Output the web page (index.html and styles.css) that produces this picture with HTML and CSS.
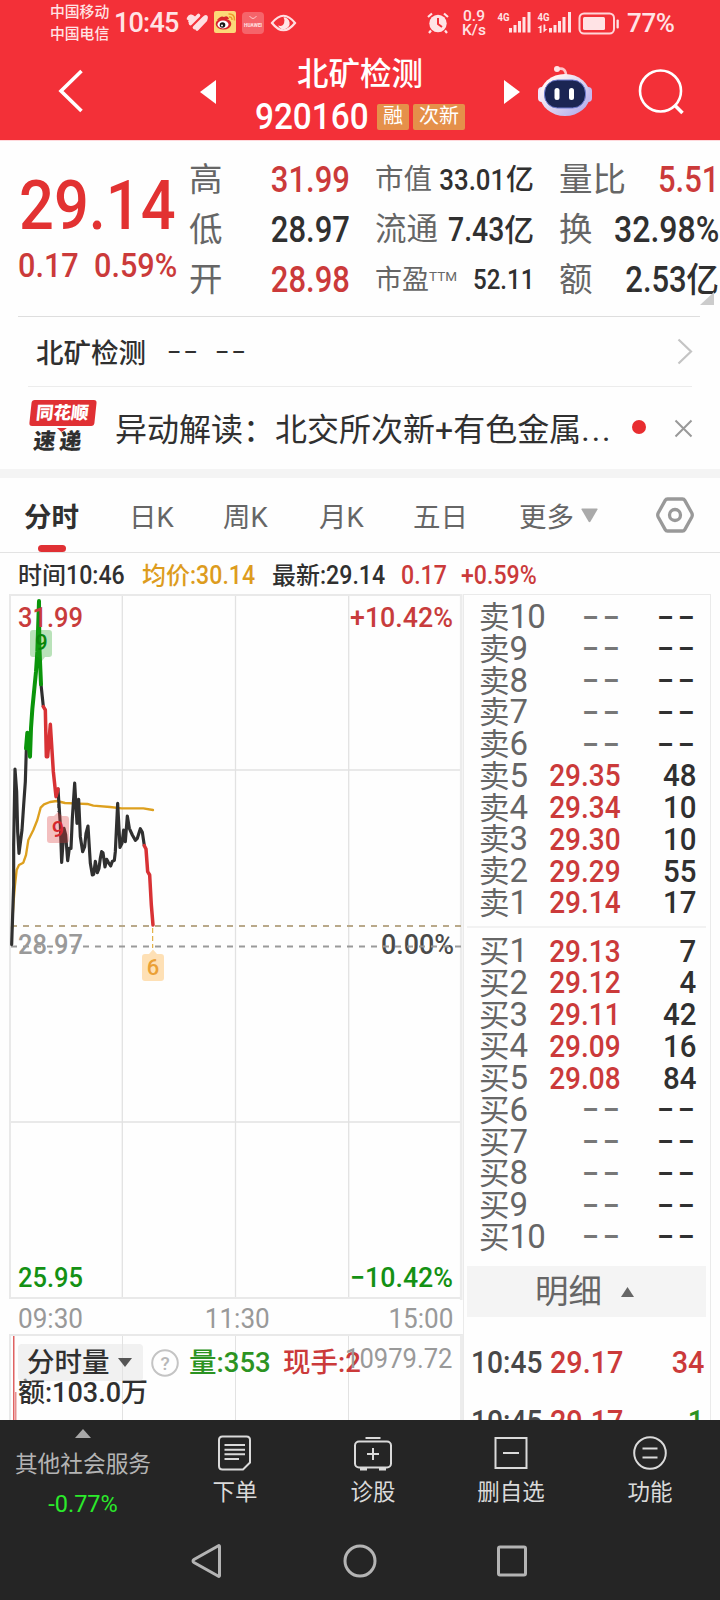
FILE: index.html
```html
<!DOCTYPE html>
<html lang="zh-CN">
<head>
<meta charset="utf-8">
<title>北矿检测 920160</title>
<link rel="stylesheet" href="styles.css">
</head>
<body>
<header class="top">
  <div class="status">
    <div class="carriers"><span>中国移动</span><span>中国电信</span></div>
    <span class="clock">10:45</span>
    <svg class="st-icons" width="112" height="26" viewBox="185 10 112 26">
      <g stroke="#ffdfe2" stroke-width="3.6" stroke-linecap="round" fill="none">
        <path d="M188.500 18.500q2-4 5-1l-3.500 4M190.500 23.500l8-8M194.500 27.500l9-9q4-4 2 1.500l-8.500 9"/>
      </g>
      <rect x="214" y="11" width="22" height="22" rx="2" fill="#fcd978"/>
      <ellipse cx="223.500" cy="24" rx="7.800" ry="5.600" fill="#d8242b"/>
      <path d="M217 20q4-5 7-3 4-2 5 2" fill="#d8242b"/>
      <ellipse cx="223" cy="24.500" rx="5.500" ry="3.900" fill="#fff"/>
      <circle cx="222.500" cy="25" r="2.800" fill="#161616"/><circle cx="222" cy="25.400" r="1" fill="#fff"/>
      <path d="M229 17q3-.5 3 3M228.500 14q6.500-.5 6 6.500" fill="none" stroke="#ef9a2d" stroke-width="1.500"/>
      <rect x="242" y="12" width="22" height="22" rx="4" fill="#f5646a"/>
      <path d="M249.500 16q3.500 5 7 0" fill="none" stroke="#ffc9cc" stroke-width="1"/>
      <text x="244" y="26.500" font-size="4.500" font-weight="700" fill="#ffe4e5" textLength="18" lengthAdjust="spacingAndGlyphs">HUAWEI</text>
      <path d="M272 23q11.500-14.500 23 0q-11.500 14.500-23 0z" fill="none" stroke="#ffdfe2" stroke-width="2.200"/>
      <path d="M283.500 17.300a6 6 0 1 1-5.400 8.300q4.500 1.500 6-2.600 1-3-.6-5.700z" fill="#ffe5e7"/>
    </svg>
    <svg class="st-alarm" width="22" height="22" viewBox="0 0 22 22">
      <circle cx="11" cy="11.500" r="8.700" fill="#ffe3e5"/><path d="M11 6v6l4 3" stroke="#f23038" stroke-width="2" fill="none"/>
      <path d="M1 5l4-3.500M21 5l-4-3.500M4 18.500l-2 2.500M18 18.500l2 2.500" stroke="#ffe3e5" stroke-width="2.200"/>
    </svg>
    <div class="speed"><span>0.9</span><span>K/s</span></div>
    <svg class="st-signal" width="122" height="24" viewBox="498 11 122 24">
      <g fill="#ffe3e5">
        <text x="498.500" y="21" font-size="11" font-weight="700" textLength="12" lengthAdjust="spacingAndGlyphs">4G</text>
        <text x="538.500" y="21" font-size="11" font-weight="700" textLength="12" lengthAdjust="spacingAndGlyphs">4G</text>
        <path d="M510 28h3v4.500h-3zM514.500 25h3v7.500h-3zM519 21h3v11.500h-3zM523.500 17h3v15.500h-3zM528.500 12h3v20.500h-3zM550 28h3v4.500h-3zM554.500 25h3v7.500h-3zM559 21h3v11.500h-3zM563.500 17h3v15.500h-3zM569 12h3v20.500h-3z"/>
        <path d="M538.500 28l4-3v8h-1.800v-5zM548.500 29l-4 3.500v-8h1.800v4.500z"/>
        <rect x="584" y="17" width="22" height="13" rx="1.500"/><rect x="617.500" y="19.500" width="2.300" height="9" rx="1"/>
      </g>
      <rect x="580.500" y="13.500" width="34.500" height="20" rx="4.500" fill="none" stroke="#ffd5d8" stroke-width="2"/>
    </svg>
    <span class="battery">77%</span>
  </div>
  <div class="titlebar">
    <svg class="back" width="26" height="44" viewBox="0 0 26 44"><path d="M23.500 2L3 22l20.500 20" fill="none" stroke="#fff" stroke-width="3.600"/></svg>
    <svg class="prev" width="16" height="24" viewBox="0 0 16 24"><path d="M16 0v24L0 12z" fill="#fff"/></svg>
    <div class="stock">
      <div class="name">北矿检测</div>
      <div class="code"><span class="code-no">920160</span><span class="tag">融</span><span class="tag wide">次新</span></div>
    </div>
    <svg class="next" width="16" height="24" viewBox="0 0 16 24"><path d="M0 0v24l16-12z" fill="#fff"/></svg>
    <svg class="robot" width="56" height="52" viewBox="0 0 56 52">
      <defs><linearGradient id="shell" x1="0" y1="0" x2="1" y2="1"><stop offset=".2" stop-color="#fff3f4"/><stop offset="1" stop-color="#a8a4ec"/></linearGradient></defs>
      <path d="M21 4q8-2 8 7" fill="none" stroke="#ffc4ca" stroke-width="2.600"/><circle cx="20" cy="4" r="3" fill="#ffe3e6"/>
      <rect x="1" y="22" width="8" height="15" rx="4" fill="#f2e4fb"/><rect x="47" y="22" width="8" height="15" rx="4" fill="#c7b8ef"/>
      <ellipse cx="28" cy="30" rx="25" ry="21" fill="url(#shell)"/>
      <rect x="7.500" y="15" width="41" height="28" rx="13" fill="#1b2553" stroke="#6e7bd0" stroke-width="1"/>
      <rect x="17.500" y="23" width="5" height="12" rx="2.500" fill="#fff"/><rect x="32" y="23" width="5" height="12" rx="2.500" fill="#fff"/>
    </svg>
    <svg class="search" width="46" height="46" viewBox="0 0 46 46"><circle cx="22.500" cy="22" r="20.500" fill="none" stroke="#fff" stroke-width="2.600"/><path d="M36.500 36l8 8" stroke="#fff" stroke-width="3.500"/></svg>
  </div>
</header>

<section class="quote">
  <div class="last">
    <div class="price"><span class="n">29.14</span></div>
    <div class="change"><span class="n c1">0.17</span><span class="n">0.59%</span></div>
  </div>
  <dl class="facts">
    <div><dt>高</dt><dd class="n red">31.99</dd></div>
    <div><dt>低</dt><dd class="n">28.97</dd></div>
    <div><dt>开</dt><dd class="n red">28.98</dd></div>
  </dl>
  <dl class="facts mid">
    <div class="s1"><dt>市值</dt><dd class="n">33.01<i>亿</i></dd></div>
    <div class="s2"><dt>流通</dt><dd class="n">7.43<i>亿</i></dd></div>
    <div class="s3"><dt>市盈<sup>TTM</sup></dt><dd class="n">52.11</dd></div>
  </dl>
  <dl class="facts end">
    <div><dt>量比</dt><dd class="n red">5.51</dd></div>
    <div><dt>换</dt><dd class="n pc">32.98%</dd></div>
    <div><dt>额</dt><dd class="n">2.53<i>亿</i></dd></div>
  </dl>
  <svg class="corner" width="14" height="13" viewBox="0 0 14 13"><path d="M14 0v13H0z" fill="#ccc"/></svg>
</section>

<section class="related">
  <span>北矿检测</span><span class="dash">--</span><span class="dash">--</span>
  <svg width="16" height="27" viewBox="0 0 16 27"><path d="M1.500 1.500l12.500 12-12.500 12" fill="none" stroke="#c4c4c4" stroke-width="2.200"/></svg>
</section>
<section class="news">
  <div class="badge"><span class="b1">同花顺</span><span class="b2">速递</span></div>
  <p>异动解读：<span>北交所次新+有色金属<b>...</b></span></p>
  <i class="dot"></i>
  <svg width="19" height="19" viewBox="0 0 19 19"><path d="M1.500 1.500l16 16M17.500 1.500l-16 16" stroke="#999" stroke-width="2"/></svg>
</section>

<nav class="tabs">
  <a class="on">分时</a><a>日K</a><a>周K</a><a>月K</a><a>五日</a><a>更多</a>
  <svg class="more" width="17" height="15" viewBox="0 0 17 15"><path d="M1 .5h15q1 0 .5 1L9.500 13.500q-1 1.500-2 0L.5 1.500Q0 .5 1 .5z" fill="#aaa"/></svg>
  <svg class="gear" width="38" height="36" viewBox="0 0 38 36"><path d="M11.500 2h15q1.500 0 2.300 1.400l7 12.600q1 2 0 4l-7 12.600q-.8 1.400-2.300 1.400h-15q-1.500 0-2.300-1.400l-7-12.600q-1-2 0-4l7-12.600Q10 2 11.500 2z" fill="none" stroke="#999" stroke-width="3.300"/><circle cx="19" cy="18" r="5.500" fill="none" stroke="#999" stroke-width="3.300"/></svg>
</nav>

<div class="readout">
  <span class="r1">时间<b class="n">10:46</b></span><span class="r2 amber">均价<b class="n">:30.14</b></span><span class="r3">最新<b class="n">:29.14</b></span><span class="r4 red"><b class="n">0.17</b></span><span class="red"><b class="n">+0.59%</b></span>
</div>

<main class="board">
  <div class="charts">
    <svg class="chart" width="463" height="706" viewBox="0 594 463 706">
      <path d="M122.300 595v703M235.500 595v703M348.700 595v703M10 770h451M10 1122h451" stroke="#e2e2e2" stroke-width="1.300" fill="none"/>
      <path d="M10 594v705M9 595h453M9 1298h453" stroke="#e9e9e9" stroke-width="2" fill="none"/>
      <path d="M461.200 594v706" stroke="#ececec" stroke-width="2.600"/>
      <g font-weight="500" font-size="27.500">
        <text x="18" y="954" fill="#999" textLength="65" lengthAdjust="spacingAndGlyphs">28.97</text>
        <text x="381" y="954" fill="#4a4a4a" textLength="73" lengthAdjust="spacingAndGlyphs">0.00%</text>
        <text x="18" y="1287" fill="#149114" textLength="65" lengthAdjust="spacingAndGlyphs">25.95</text>
        <text x="350" y="1287" fill="#149114" textLength="103" lengthAdjust="spacingAndGlyphs">−10.42%</text>
        <text x="350" y="627" fill="#c83c3c" textLength="103" lengthAdjust="spacingAndGlyphs">+10.42%</text>
      </g>
      <path d="M11 926h450" stroke="#b9a98a" stroke-width="2" stroke-dasharray="6 6"/>
      <path d="M11 946.500h450" stroke="#9a9a9a" stroke-width="2" stroke-dasharray="6 6"/>
      <g transform="translate(0 585) scale(.33333)" fill="none" stroke-linejoin="round" stroke-linecap="round">
        <path d="M36 1030L40 960 45 900 50 855 57 840 70 833 78 810 85 765 100 735 112 705 122 668 132 658 150 651 170 648 195 654 235 656 262 657 280 662 330 666 365 670 430 670 459 675" stroke="#dda01f" stroke-width="7"/>
        <path d="M35 1078L41 900 41 780 45 552 50 620 53 740 57 805 66 735 71 660 76 590 79 492M123 298L130 365M174 612L181 720 185 832 192 730 197 750 203 827 208 790 213 790 217 700 224 594 231 715 236 643 241 755 248 800 254 785 258 745 264 723 271 835 277 870 281 868 286 829 292 863 297 850 301 820 305 800 309 803 315 846 320 823 325 832 332 843 337 829 343 826 346 800 353 655 360 787 366 775 371 735 376 770 382 693 388 730 397 750 406 766 412 760 421 731 427 742 433 782" stroke="#303030" stroke-width="9.500"/>
        <path d="M130 365L136 375 139 515 143 515 151 418 160 560 168 635 174 612M433 782L438 792 443 860 449 870 454 960 459 1020" stroke="#d83235" stroke-width="10.500"/>
        <path d="M78 490L82 443 90 515 93 430 97 372 108 260 112 200 117 48 118 180 123 298" stroke="#0b950b" stroke-width="12"/>
      </g>
      <path d="M58 797v15" stroke="#333" stroke-dasharray="4 3"/>
      <path d="M33 630h16q3 0 3 3v21q0 3-3 3h-4l-3 4-4-4h-5q-3 0-3-3v-21q0-3 3-3z" fill="#19a119" fill-opacity=".3"/>
      <path d="M50 816h4l4-4 4 4h4q3 0 3 3v21q0 3-3 3H50q-3 0-3-3v-21q0-3 3-3z" fill="#dc3a3a" fill-opacity=".32"/>
      <path d="M152.700 928v20" stroke="#dda01f" stroke-dasharray="5 3"/>
      <path d="M145 954h4l4-4.500 4 4.500h4q3 0 3 3v21q0 3-3 3h-16q-3 0-3-3v-21q0-3 3-3z" fill="#fee0b5"/>
      <g font-weight="500" font-size="22" text-anchor="middle">
        <text x="41.500" y="650" fill="#0b850b">9</text><text x="58" y="837" fill="#d6262d">9</text><text x="153" y="975" fill="#eba035">6</text>
      </g>
      <text x="18" y="627" font-weight="500" font-size="27.500" fill="#c83c3c" textLength="65" lengthAdjust="spacingAndGlyphs">31.99</text>
    </svg>
    <div class="axis"><span class="n">09:30</span><span class="n">11:30</span><span class="n">15:00</span></div>
    <div class="volume">
      <div class="vol-head">
        <span class="pick">分时量<svg width="14" height="9" viewBox="0 0 14 9"><path d="M0 0h14L7 9z" fill="#555"/></svg></span>
        <svg class="help" width="28" height="28" viewBox="0 0 28 28"><circle cx="14" cy="14" r="12.800" fill="none" stroke="#c4c4c4" stroke-width="2"/><text x="14" y="21" text-anchor="middle" font-size="19" fill="#b8b8b8">?</text></svg>
        <span class="green q">量<b class="n">:353</b></span><span class="red h">现手<b class="n">:2</b></span>
        <span class="max n">10979.72</span>
      </div>
      <div class="amount">额<b class="n">:103.0</b>万</div>
    </div>
  </div>
  <aside class="book">
    <div class="side">
      <div class="row"><span>卖<b>10</b></span><em>--</em><strong class="nil">--</strong></div>
      <div class="row"><span>卖<b>9</b></span><em>--</em><strong class="nil">--</strong></div>
      <div class="row"><span>卖<b>8</b></span><em>--</em><strong class="nil">--</strong></div>
      <div class="row"><span>卖<b>7</b></span><em>--</em><strong class="nil">--</strong></div>
      <div class="row"><span>卖<b>6</b></span><em>--</em><strong class="nil">--</strong></div>
      <div class="row"><span>卖<b>5</b></span><i>29.35</i><strong>48</strong></div>
      <div class="row"><span>卖<b>4</b></span><i>29.34</i><strong>10</strong></div>
      <div class="row"><span>卖<b>3</b></span><i>29.30</i><strong>10</strong></div>
      <div class="row"><span>卖<b>2</b></span><i>29.29</i><strong>55</strong></div>
      <div class="row"><span>卖<b>1</b></span><i>29.14</i><strong>17</strong></div>
    </div>
    <div class="side buy">
      <div class="row"><span>买<b>1</b></span><i>29.13</i><strong>7</strong></div>
      <div class="row"><span>买<b>2</b></span><i>29.12</i><strong>4</strong></div>
      <div class="row"><span>买<b>3</b></span><i>29.11</i><strong>42</strong></div>
      <div class="row"><span>买<b>4</b></span><i>29.09</i><strong>16</strong></div>
      <div class="row"><span>买<b>5</b></span><i>29.08</i><strong>84</strong></div>
      <div class="row"><span>买<b>6</b></span><em>--</em><strong class="nil">--</strong></div>
      <div class="row"><span>买<b>7</b></span><em>--</em><strong class="nil">--</strong></div>
      <div class="row"><span>买<b>8</b></span><em>--</em><strong class="nil">--</strong></div>
      <div class="row"><span>买<b>9</b></span><em>--</em><strong class="nil">--</strong></div>
      <div class="row"><span>买<b>10</b></span><em>--</em><strong class="nil">--</strong></div>
    </div>
    <div class="detail">明细<svg width="13" height="10" viewBox="0 0 13 10"><path d="M6.500 0L13 10H0z" fill="#666"/></svg></div>
    <div class="tick"><span>10:45</span><i>29.17</i><strong class="red">34</strong></div>
    <div class="tick"><span>10:45</span><i>29.17</i><strong class="green">1</strong></div>
  </aside>
</main>

<footer class="bottom">
  <div class="actions">
    <div class="sector"><svg width="16" height="9" viewBox="0 0 16 9"><path d="M8 0l8 9H0z" fill="#a8a8a8"/></svg><span>其他社会服务</span><span class="pct">-0.77%</span></div>
    <div class="act"><svg width="40" height="36" viewBox="0 0 40 36"><path d="M7.500 1.500h24q3.500 0 3.500 3.500v22.500l-7 7H7.500Q4 34.500 4 31V5q0-3.500 3.500-3.500z"/><path d="M9.500 10h20.500M9.500 14.700h20.500M9.500 19.300h20.500M9.500 24h14.500"/></svg><span>下单</span></div>
    <div class="act"><svg width="40" height="36" viewBox="0 0 40 36"><path d="M12.500 3h15M20 13v12M14 19h12"/><rect x="2" y="6.500" width="36" height="26" rx="4"/><path d="M7 34h7M26 34h7" stroke-width="3"/></svg><span>诊股</span></div>
    <div class="act"><svg width="40" height="36" viewBox="0 0 40 36"><rect x="4.500" y="3" width="31" height="30"/><path d="M12 18h16"/></svg><span>删自选</span></div>
    <div class="act"><svg width="40" height="36" viewBox="0 0 40 36"><circle cx="20" cy="18" r="15.800"/><path d="M12.500 13.500h15M12.500 22.500h15"/></svg><span>功能</span></div>
  </div>
  <div class="sysnav">
    <svg width="31" height="36" viewBox="0 0 31 36"><path d="M28.500 3.500v29q0 1.500-1.500.5L3 19.500q-2-1.500 0-3L27 3q1.500-1 1.500.5z"/></svg>
    <svg width="36" height="36" viewBox="0 0 36 36"><circle cx="18" cy="18" r="15"/></svg>
    <svg width="32" height="36" viewBox="0 0 32 36"><rect x="2.500" y="4" width="27" height="28" rx="1.500"/></svg>
  </div>
</footer>
</body>
</html>
```
FILE: styles.css
```css
* { box-sizing: border-box; margin: 0; padding: 0; }
body {
  width: 720px; height: 1600px; overflow: hidden; background: #fefefe; color: #303030;
  font-family: Roboto, "Noto Sans CJK SC", sans-serif;
  display: flex; flex-direction: column; white-space: nowrap;
}
i, em { font-style: normal; }
svg { display: block; flex: none; overflow: visible; }
.n { display: inline-block; font-weight: 500; transform: scaleX(.9); transform-origin: left; }
.red { color: #cb3a3a; }
.green { color: #2c9322; }
.amber { color: #dd9c1e; }

/* status bar and title */
.top { height: 141px; flex: none; background: #f33038; color: #fff; border-bottom: 1px solid #ffd9dc; }
.status { height: 46px; padding-left: 50px; display: flex; align-items: center; color: #ffe3e5; }
.carriers { width: 64px; display: flex; flex-direction: column; font-size: 14.800px; font-weight: 500; line-height: 22px; }
.clock { width: 71px; font-size: 27px; font-weight: 500; letter-spacing: -.8px; }
.st-alarm { margin-left: 130px; }
.speed { width: 38px; margin-left: 6px; text-align: center; display: flex; flex-direction: column; font-size: 15.500px; font-weight: 500; line-height: 14.500px; align-items: center; margin-right: 4px; }
.battery { margin-left: 8px; font-size: 26px; font-weight: 500; letter-spacing: -.4px; }
.titlebar { display: flex; height: 94px; align-items: flex-start; }
.back { margin: 23px 0 0 58px; }
.prev { margin: 34px 0 0 116px; }
.next { margin-top: 34px; }
.robot { margin: 19px 0 0 17px; }
.search { margin: 23px 0 0 45px; }
.stock { width: 288px; padding-top: 6px; }
.name { font-size: 31.500px; font-weight: 500; line-height: 46px; height: 46px; text-align: center; }
.code { display: flex; align-items: center; height: 38px; padding-left: 39px; }
.code-no { width: 122px; font-size: 36px; font-weight: 500; transform: scaleX(.925); transform-origin: left; }
.tag { width: 32px; height: 26px; line-height: 25px; border-radius: 2px; background: #e5904a; font-size: 20px; text-align: center; }
.tag.wide { width: 52px; margin-left: 4px; }

/* quote summary */
.quote { position: relative; height: 175px; flex: none; display: flex; padding-top: 14px; }
.last { width: 189px; padding-top: 13px; color: #e23232; }
.price { height: 76px; padding: 0 0 0 19px; font-size: 69px; line-height: 76px; }
.price .n { transform: scaleX(.89); }
.change { padding-left: 18px; font-size: 34px; line-height: 42px; color: #cb3a3a; }
.change .c1 { width: 76px; }
.facts { width: 161px; }
.facts.mid { margin-left: 25px; width: 159px; }
.facts.end { margin-left: 25px; width: 160px; }
.facts div { height: 50px; display: flex; justify-content: space-between; align-items: center; }
dt { font-size: 33.500px; line-height: 46px; color: #666; margin-top: -1px; }
dd { font-size: 36px; line-height: 46px; margin-left: -24px; }
dd.n { transform: scaleX(.86); transform-origin: right; }
dd.pc { transform: scaleX(.89); }
dd i { font-size: 34px; display: inline-block; transform: scaleX(1.120); transform-origin: right; margin-left: 4px; }
.s1 dt { font-size: 28.500px; }
.s1 dd { font-size: 30px; }
.s1 dd i { font-size: 29px; }
.s2 dt { font-size: 31.500px; }
.s2 dd { font-size: 33px; }
.s2 dd i { font-size: 31px; }
.s3 dt { font-size: 27px; }
.s3 dd { font-size: 28px; }
sup { font-size: 13.500px; vertical-align: 8px; line-height: 0; }
.corner { position: absolute; left: 700px; top: 151px; }

.related { height: 71px; flex: none; margin: 0 28px; padding-left: 8px; display: flex; align-items: center; font-size: 27.500px; font-weight: 500; border-bottom: 1px solid #ececec; position: relative; }
.related::before { content: ""; position: absolute; left: -10px; right: -8px; top: 0; border-top: 1px solid #dedede; }
.dash { width: 48px; letter-spacing: 2.500px; transform: scaleX(1.650); transform-origin: left; font-size: 27px; font-weight: 400; }
.related span:first-child { width: 132px; }
.related svg { margin-left: auto; margin-right: -1px; }
.news { height: 82px; flex: none; display: flex; align-items: center; padding-left: 28px; }
.badge { position: relative; width: 68px; height: 54px; margin: -2px 20px 0 -1px; transform: skewX(-6deg); font-weight: 900; display: flex; flex-direction: column; align-items: center; }
.badge::after { content: ""; position: absolute; left: 30px; top: 28px; border: 5px solid transparent; border-top: 4px solid #e03034; border-bottom: 0; }
.b1 { width: 65px; height: 28px; line-height: 26px; background: #e03034; color: #fff; border-radius: 3px; font-size: 17.500px; text-align: center; }
.b2 { font-size: 22px; line-height: 32px; letter-spacing: 4px; }
.news p { width: 505px; font-size: 32px; margin-top: -2px; }
.news p b { font-weight: 400; letter-spacing: 2px; }
.dot { width: 14px; height: 14px; margin: -2px 28px 0 12px; border-radius: 50%; background: #e82d30; }

.tabs { height: 84px; flex: none; border-top: 9px solid #f4f4f4; border-bottom: 1px solid #e3e3e3; display: flex; padding-left: 24px; color: #666; font-size: 27.500px; line-height: 79px; }
.tabs a { position: relative; }
.tabs a:nth-child(1) { width: 105px; }
.tabs a:nth-child(2) { width: 94px; }
.tabs a:nth-child(3) { width: 96px; }
.tabs a:nth-child(4) { width: 94px; }
.tabs a:nth-child(5) { width: 106px; }
.tabs a:nth-child(6) { width: 62px; }
.tabs .on { font-weight: 700; color: #303030; }
.on::after { content: ""; position: absolute; left: 14px; bottom: 0; width: 28px; height: 7px; border-radius: 4px; background: #e03034; }
.more { margin: 30px 58px 0 0; }
.gear { margin-top: 19px; }

.readout { height: 41px; flex: none; padding-left: 18px; display: flex; font-size: 24px; font-weight: 500; line-height: 45px; }
.readout .n { font-size: 26px; transform: scaleX(.89); }
.r1 { width: 124px; } .r2 { width: 130px; } .r3 { width: 129px; } .r4 { width: 60px; }

/* chart column */
.board { height: 826px; flex: none; display: flex; overflow: hidden; }
.charts { width: 463px; }
.axis { height: 34px; padding: 0 10px 0 18px; display: flex; justify-content: space-between; font-size: 27.500px; line-height: 37px; color: #999; }
.axis .n { font-weight: 400; transform: scaleX(.95); }
.axis .n:nth-child(2) { transform-origin: center; margin-left: 3px; }
.axis .n:nth-child(3) { transform-origin: right; }
.volume {
  height: 90px; margin-left: 9px; border-top: 2px solid #e9e9e9; border-left: 2px solid #e9e9e9; border-right: 3px solid #ececec;
  background:
    linear-gradient(#df6262, #df6262) 2px 0 / 1.500px 100% no-repeat,
    linear-gradient(#e89090, #e89090) 4px 56px / 1.500px 100% no-repeat,
    linear-gradient(#e2e2e2, #e2e2e2) 111px 0 / 1px 100% no-repeat,
    linear-gradient(#e2e2e2, #e2e2e2) 224px 0 / 1px 100% no-repeat,
    linear-gradient(#e2e2e2, #e2e2e2) 337px 0 / 1px 100% no-repeat;
}
.vol-head { position: relative; height: 37px; margin: 8px 0 0 7px; display: flex; align-items: center; font-size: 27.500px; font-weight: 500; line-height: 38px; }
.vol-head b.n { transform: scaleX(1); }
.pick { width: 125px; height: 37px; padding-left: 9px; display: flex; align-items: center; gap: 8px; border-radius: 4px; background: rgba(228, 228, 228, .5); font-size: 27.500px; }
.help { margin: 0 10px 0 8px; }
.q { width: 94px; } .h { width: 100px; }
.max { position: absolute; right: 8px; top: -4px; color: #999; font-weight: 400; transform: scaleX(.93); transform-origin: right; }
.amount { margin: -5px 0 0 7px; font-size: 27px; font-weight: 500; line-height: 34px; }
.amount .n { transform: none; }

/* order book */
.book { width: 248px; border: 1px solid #eaeaea; border-bottom: 0; padding: 6px 4px 0 3px; }
.side { height: 325px; padding-left: 12px; }
.buy { border-top: 2px solid #f2f2f2; height: 340px; padding-top: 7px; }
.row { height: 31.750px; display: grid; grid-template-columns: 73px 69px 75px; align-items: center; line-height: 31px; font-size: 32px; }
.row span { color: #666; font-size: 30.500px; }
.row b { font-weight: 400; font-size: 33px; letter-spacing: -.8px; }
.row i, .row em, .row strong { font-weight: 500; justify-self: end; transform: scaleX(.875); transform-origin: right; }
.row strong { transform: scaleX(.92); }
.row i, .tick i { color: #cb3a3a; }
.row em, .row .nil { letter-spacing: 2.500px; transform: translate(3px, -1px) scaleX(1.550); }
.row em { color: #777; }
.detail { height: 51px; background: #f4f4f4; display: flex; align-items: center; padding-left: 68px; gap: 19px; font-size: 33.500px; color: #666; line-height: 50px; }
.tick { height: 59px; display: grid; grid-template-columns: 79px 79px 80px; font-size: 32px; font-weight: 500; line-height: 58px; padding-left: 4px; }
.detail + .tick { margin-top: 16px; }
.tick span { color: #484848; transform: scaleX(.88); transform-origin: left; }
.tick i { transform: scaleX(.9); transform-origin: left; }
.tick strong { font-weight: 500; justify-self: end; transform: scaleX(.9); transform-origin: right; margin-right: 5px; }

/* bottom bar */
.bottom { position: relative; height: 180px; flex: none; background: #252525; color: #dadada; }
.actions { height: 112px; display: grid; grid-template-columns: 166px 138px 138px 138px 140px; font-size: 22.500px; }
.sector, .act { display: flex; flex-direction: column; align-items: center; }
.sector { padding-top: 9px; color: #b4b4b4; font-size: 22.700px; line-height: 34px; }
.sector span:first-of-type { margin-top: 10px; }
.pct { color: #2bea2b; margin-top: 5px; font-size: 23.500px; }
.act { padding-top: 15px; line-height: 34px; }
.act span { margin-top: 4px; }
.act svg { fill: none; stroke: #dadada; stroke-width: 2; }
.sysnav { display: flex; padding: 11px 0 0 191px; }
.sysnav svg { fill: none; stroke: #b4b4b4; stroke-width: 3; }
.sysnav svg:nth-child(2) { margin: 0 118px 0 120px; }
```
